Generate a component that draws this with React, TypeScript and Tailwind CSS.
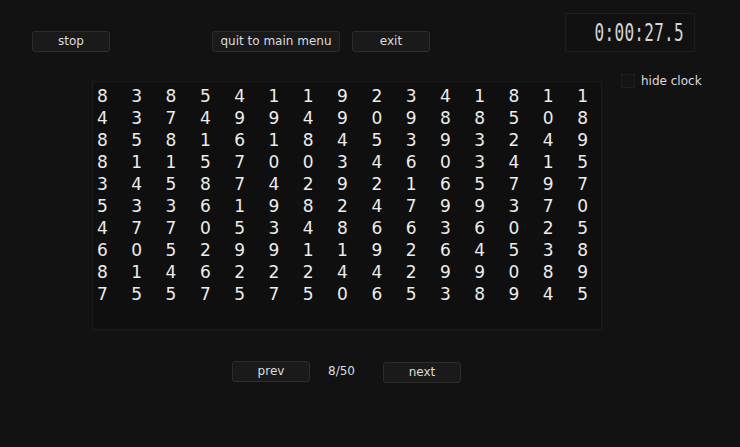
import React from 'react';

const rows = [
  '838541192341811',
  '437499490988508',
  '858161845393249',
  '811570034603415',
  '345874292165797',
  '533619824799370',
  '477053486636025',
  '605299119264538',
  '814622244299089',
  '755757506538945',
];

const Btn: React.FC<{ label: string; w: string }> = ({ label, w }) => (
  <button
    className={`${w} h-[21px] rounded-[3px] border border-[#2c2c2c] bg-[#1a1a1a] text-[12px] leading-none text-[#dcdcdc]`}
  >
    {label}
  </button>
);

export default function App() {
  return (
    <div
      className="w-full h-[447px] bg-[#121212] overflow-hidden flex flex-col"
      style={{ fontFamily: '"DejaVu Sans", sans-serif' }}
    >
      {/* Top bar */}
      <div className="flex items-end pt-[13px]">
        <div className="ml-[32px]">
          <Btn label="stop" w="w-[78px]" />
        </div>
        <div className="ml-[102px]">
          <Btn label="quit to main menu" w="w-[128px]" />
        </div>
        <div className="ml-[12px]">
          <Btn label="exit" w="w-[78px]" />
        </div>
        <div className="ml-[135px] w-[130px] h-[39px] border border-[#1e1e1e] bg-[#111111] flex items-center justify-end pr-[10px]">
          <span
            className="text-[#d4d4d4] text-[16px] tracking-[0.3px] scale-y-[1.6] origin-center"
            style={{ fontFamily: '"DejaVu Sans Mono", monospace' }}
          >
            0:00:27.5
          </span>
        </div>
      </div>

      {/* Grid + option */}
      <div className="flex items-start mt-[21px]">
        <div className="ml-[92px] mt-[8px] w-[510px] h-[249px] border border-[#1c1c1c] bg-[#0f0f0f] pl-[4px] pt-[3px]">
          {rows.map((r, i) => (
            <div key={i} className="grid grid-cols-[repeat(15,34.3px)] h-[22px] leading-[22px] text-[17px] text-[#ececec]">
              {r.split('').map((d, j) => (
                <span key={j}>{d}</span>
              ))}
            </div>
          ))}
        </div>
        <label className="ml-[19px] mt-[1px] flex items-center gap-[6px]">
          <span className="w-[14px] h-[14px] border border-[#1f1f1f] bg-[#141414]" />
          <span className="text-[12px] text-[#dcdcdc] leading-[14px]">hide clock</span>
        </label>
      </div>

      {/* Pager */}
      <div className="flex items-center mt-[29px] ml-[232px]">
        <Btn label="prev" w="w-[78px]" />
        <span className="ml-[18px] text-[12px] text-[#dcdcdc] -mt-[1px]">8/50</span>
        <div className="ml-[28px]">
          <Btn label="next" w="w-[78px]" />
        </div>
      </div>
    </div>
  );
}
